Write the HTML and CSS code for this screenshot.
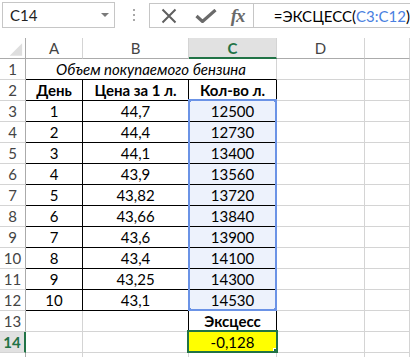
FILE: index.html
```html
<!DOCTYPE html>
<html lang="ru">
<head>
    <meta charset="UTF-8">
    <meta name="viewport" content="width=device-width, initial-scale=1.0">
    <title>ЭКСЦЕСС</title>
    <link rel="stylesheet" href="styles.css">
</head>
<body>
    <div class="app">
        <div class="toolbar">
            <div class="name-box">
                <span class="name-text">C14</span>
                <svg class="name-arrow" width="8" height="4" viewBox="0 0 8 4"><path d="M0 0h8L4 4z" fill="#7a7a7a"/></svg>
            </div>
            <div class="grip"><i></i><i></i><i></i></div>
            <div class="formula-bar">
                <div class="fbtns">
                    <svg class="icon-x" width="16" height="16" viewBox="0 0 16 16"><path d="M1.5 1.5l13 13M14.5 1.5l-13 13" stroke="#5f5f5f" stroke-width="2" fill="none"/></svg>
                    <svg class="icon-ok" width="22" height="14" viewBox="0 0 22 14"><path d="M1.5 7l6 5.5L20.5 1" stroke="#6a6a6a" stroke-width="3.2" fill="none"/></svg>
                    <span class="fx">fx</span>
                </div>
                <div class="formula">=ЭКСЦЕСС(<span class="ref-text">C3:C12</span>)</div>
            </div>
        </div>

        <div class="sheet">
            <div class="corner"><svg width="26" height="21" viewBox="0 0 26 21"><path d="M23 5v13H10z" fill="#dedede"/></svg></div>
            <div class="ch">A</div>
            <div class="ch">B</div>
            <div class="ch ch-sel">C</div>
            <div class="ch">D</div>
            <div class="ch"></div>

            <div class="rh">1</div>
            <div class="c merged tb it">Объем покупаемого бензина</div>
            <div class="c"></div>
            <div class="c"></div>

            <div class="rh">2</div>
            <div class="c t bold">День</div>
            <div class="c t bold">Цена за 1 л.</div>
            <div class="c t bold">Кол-во л.</div>
            <div class="c"></div>
            <div class="c"></div>

            <div class="rh">3</div>
            <div class="c t">1</div>
            <div class="c t">44,7</div>
            <div class="c t ref">12500</div>
            <div class="c"></div>
            <div class="c"></div>

            <div class="rh">4</div>
            <div class="c t">2</div>
            <div class="c t">44,4</div>
            <div class="c t ref">12730</div>
            <div class="c"></div>
            <div class="c"></div>

            <div class="rh">5</div>
            <div class="c t">3</div>
            <div class="c t">44,1</div>
            <div class="c t ref">13400</div>
            <div class="c"></div>
            <div class="c"></div>

            <div class="rh">6</div>
            <div class="c t">4</div>
            <div class="c t">43,9</div>
            <div class="c t ref">13560</div>
            <div class="c"></div>
            <div class="c"></div>

            <div class="rh">7</div>
            <div class="c t">5</div>
            <div class="c t">43,82</div>
            <div class="c t ref">13720</div>
            <div class="c"></div>
            <div class="c"></div>

            <div class="rh">8</div>
            <div class="c t">6</div>
            <div class="c t">43,66</div>
            <div class="c t ref">13840</div>
            <div class="c"></div>
            <div class="c"></div>

            <div class="rh">9</div>
            <div class="c t">7</div>
            <div class="c t">43,6</div>
            <div class="c t ref">13900</div>
            <div class="c"></div>
            <div class="c"></div>

            <div class="rh">10</div>
            <div class="c t">8</div>
            <div class="c t">43,4</div>
            <div class="c t ref">14100</div>
            <div class="c"></div>
            <div class="c"></div>

            <div class="rh">11</div>
            <div class="c t">9</div>
            <div class="c t">43,25</div>
            <div class="c t ref">14300</div>
            <div class="c"></div>
            <div class="c"></div>

            <div class="rh">12</div>
            <div class="c t">10</div>
            <div class="c t">43,1</div>
            <div class="c t ref">14530</div>
            <div class="c"></div>
            <div class="c"></div>

            <div class="rh">13</div>
            <div class="c"></div>
            <div class="c tr"></div>
            <div class="c tr bold">Эксцесс</div>
            <div class="c"></div>
            <div class="c"></div>

            <div class="rh rh-sel">14</div>
            <div class="c"></div>
            <div class="c tr"></div>
            <div class="c tr yellow">-0,128</div>
            <div class="c"></div>
            <div class="c"></div>

            <div class="rh"></div>
            <div class="c"></div>
            <div class="c"></div>
            <div class="c"></div>
            <div class="c"></div>
            <div class="c"></div>

            <!-- range highlight of C3:C12 and the active cell -->
            <div class="range">
                <i class="knob k-tl"></i><i class="knob k-tr"></i>
                <i class="knob k-bl"></i><i class="knob k-br"></i>
            </div>
            <div class="active"><i class="fill-handle"></i></div>
        </div>
    </div>
</body>
</html>
```

FILE: styles.css
```css
body {
    margin: 0;
    background: #fff;
    font-family: Lato, "Liberation Sans", sans-serif;
    font-size: 15px;
    color: #000;
}
.app {
    width: 410px;
    height: 357px;
    overflow: hidden;
}

/* top bar */
.toolbar {
    height: 38px;
    box-sizing: border-box;
    padding-top: 2px;
    display: flex;
    align-items: flex-start;
}
.name-box {
    margin-left: 2px;
    width: 135px;
    height: 26px;
    box-sizing: border-box;
    border: 1px solid #c6c6c6;
    display: flex;
    align-items: center;
    justify-content: space-between;
    padding: 0 5px 0 7px;
    color: #222;
}
.grip {
    width: 2px;
    margin: 7px 14px 0 18px;
    display: flex;
    flex-direction: column;
    gap: 3px;
}
.grip i {
    width: 2px;
    height: 2px;
    background: #a8a8a8;
}
.formula-bar {
    flex: 1;
    height: 25px;
    margin-top: 1px;
    box-sizing: border-box;
    border: 1px solid #c6c6c6;
    border-right: none;
    display: flex;
}
.fbtns {
    width: 103px;
    display: flex;
    align-items: center;
    padding-left: 11px;
    box-sizing: border-box;
}
.icon-x {
    margin-right: 18px;
}
.icon-ok {
    margin-right: 14px;
}
.fx {
    font-family: "Liberation Serif", serif;
    font-style: italic;
    font-weight: bold;
    font-size: 19px;
    color: #6a6a6a;
    letter-spacing: -1px;
}
.formula {
    flex: 1;
    border-left: 1px solid #c6c6c6;
    padding-left: 20px;
    display: flex;
    align-items: center;
    white-space: nowrap;
    overflow: hidden;
}
.ref-text {
    color: #4a7fe0;
}

/* sheet grid */
.sheet {
    position: relative;
    display: grid;
    grid-template-columns: 26px 57px 106px 88px 88px 45px;
    grid-auto-rows: 21px;
}
.sheet > div {
    box-sizing: border-box;
    display: flex;
    align-items: center;
    justify-content: center;
    white-space: nowrap;
    overflow: hidden;
}
.corner {
    border-right: 1px solid #ababab;
    border-bottom: 1px solid #ababab;
}
.ch {
    color: #444;
    border-right: 1px solid #d4d4d4;
    border-bottom: 1px solid #ababab;
}
.ch-sel {
    background: #e1e1e1;
    color: #217346;
    font-weight: bold;
    border-bottom: 2px solid #217346;
}
.rh {
    color: #444;
    border-right: 1px solid #ababab;
    border-bottom: 1px solid #d4d4d4;
}
.rh-sel {
    background: #e1e1e1;
    color: #217346;
    font-weight: bold;
    border-right: 2px solid #217346;
}
.c {
    border-right: 1px solid #d4d4d4;
    border-bottom: 1px solid #d4d4d4;
}
.merged {
    grid-column: span 3;
}
.t {
    border-right-color: #000;
    border-bottom-color: #000;
}
.tb {
    border-bottom-color: #000;
}
.tr {
    border-right-color: #000;
}
.it {
    font-style: italic;
}
.bold {
    font-weight: bold;
}
.ref {
    background: #edf2fc;
}
.yellow {
    background: #ffff00;
}

/* overlays */
.range {
    position: absolute;
    left: 188px;
    top: 61px;
    width: 89px;
    height: 212px;
    box-sizing: border-box;
    border: 2px solid #6b93e6;
}
.knob {
    position: absolute;
    width: 5px;
    height: 5px;
    background: #6b93e6;
}
.k-tl { left: -4px; top: -4px; }
.k-tr { right: -4px; top: -4px; }
.k-bl { left: -4px; bottom: -4px; }
.k-br { right: -4px; bottom: -4px; }
.active {
    position: absolute;
    left: 187px;
    top: 292px;
    width: 91px;
    height: 23px;
    box-sizing: border-box;
    border: 2px solid #217346;
}
.fill-handle {
    position: absolute;
    right: -4px;
    bottom: -4px;
    width: 5px;
    height: 5px;
    background: #217346;
    border: 1px solid #fff;
}
```
